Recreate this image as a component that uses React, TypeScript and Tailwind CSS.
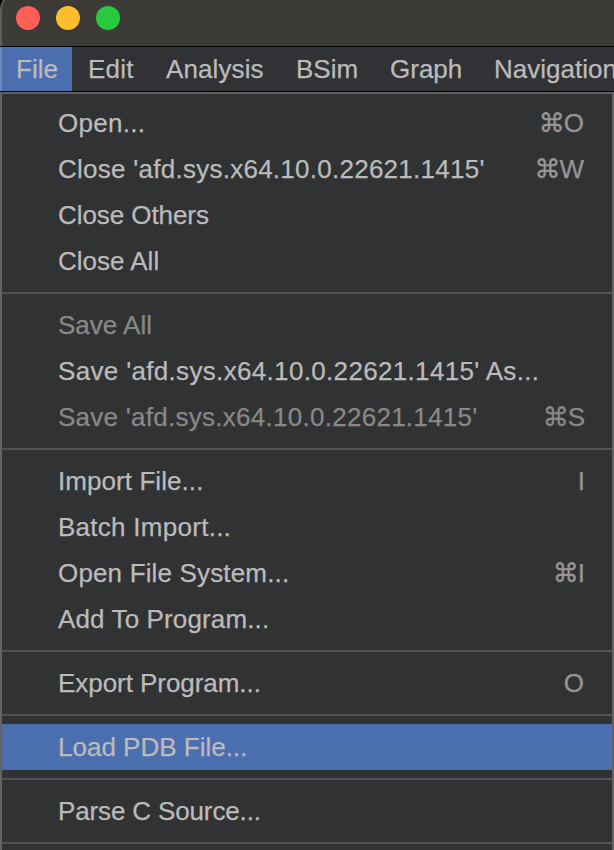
type Entry = { label: string; spacing: string; keys?: string; cmd?: boolean; disabled?: boolean; active?: boolean };

const bar = [
  { label: 'File', box: 'w-[72px]', active: true },
  { label: 'Edit', box: 'w-[78px] tracking-[0.2px]' },
  { label: 'Analysis', box: 'w-[130px] tracking-[0.1px]' },
  { label: 'BSim', box: 'w-[94px]' },
  { label: 'Graph', box: 'w-[104px]' },
  { label: 'Navigation', box: 'w-[136px]' },
];

const groups: Entry[][] = [
  [
    { label: 'Open...', spacing: 'tracking-[0.3px]', keys: 'O', cmd: true },
    { label: "Close 'afd.sys.x64.10.0.22621.1415'", spacing: 'tracking-[0.26px]', keys: 'W', cmd: true },
    { label: 'Close Others', spacing: 'tracking-[-0.07px]' },
    { label: 'Close All', spacing: 'tracking-normal' },
  ],
  [
    { label: 'Save All', spacing: 'tracking-normal', disabled: true },
    { label: "Save 'afd.sys.x64.10.0.22621.1415' As...", spacing: 'tracking-[0.33px]' },
    { label: "Save 'afd.sys.x64.10.0.22621.1415'", spacing: 'tracking-[0.27px]', keys: 'S', cmd: true, disabled: true },
  ],
  [
    { label: 'Import File...', spacing: 'tracking-[0.07px]', keys: 'I' },
    { label: 'Batch Import...', spacing: 'tracking-[0.27px]' },
    { label: 'Open File System...', spacing: 'tracking-[0.16px]', keys: 'I', cmd: true },
    { label: 'Add To Program...', spacing: 'tracking-[0.13px]' },
  ],
  [{ label: 'Export Program...', spacing: 'tracking-[-0.05px]', keys: 'O' }],
  [{ label: 'Load PDB File...', spacing: 'tracking-normal', active: true }],
  [{ label: 'Parse C Source...', spacing: 'tracking-[-0.14px]' }],
];

function MenuRow({ item }: { item: Entry }) {
  return (
    <div
      className={`flex h-[46px] shrink-0 items-center justify-between pl-14 ${
        item.keys === 'I' || item.keys === 'S' ? 'pr-[27px]' : 'pr-7'
      } ${item.active ? 'bg-[#4b6eaf]' : ''} ${item.disabled ? 'text-[#888888]' : 'text-[#bbbbbb]'}`}
    >
      <span className={`whitespace-pre ${item.spacing}`}>{item.label}</span>
      {item.keys && (
        <span className={`flex items-center ${item.disabled ? 'text-[#888888]' : 'text-[#969696]'}`}>
          {item.cmd && (
            <span className="mr-[-1px] font-['DejaVu_Sans',sans-serif] text-[26px] [-webkit-text-stroke:0.4px]">⌘</span>
          )}
          <span>{item.keys}</span>
        </span>
      )}
    </div>
  );
}

export default function App() {
  return (
    <div className="h-[850px] w-[614px] overflow-hidden bg-black font-['Liberation_Sans',Arial,sans-serif] text-[26px] leading-[46px] [-webkit-text-stroke:0.25px]">
      <div className="-mt-2 flex h-[858px] flex-col">
        <header className="flex h-[54px] shrink-0 gap-4 rounded-tl-[18px] border-t-2 border-l-2 border-[#5e5e5c] bg-[#3b3a37] pt-3 pl-[14px]">
          <span className="size-6 rounded-full bg-[#ff5f57]" />
          <span className="size-6 rounded-full bg-[#febc2e]" />
          <span className="size-6 rounded-full bg-[#28c840]" />
        </header>
        <nav className="flex h-[46px] shrink-0 border-y border-black bg-[#313235] leading-[45px] text-[#bbbbbb]">
          {bar.map((b) => (
            <div
              key={b.label}
              className={`shrink-0 ${b.box} ${b.active ? 'border-l-2 border-[#7089b8] bg-[#4b6eaf] pl-[14px]' : 'pl-4'}`}
            >
              {b.label}
            </div>
          ))}
        </nav>
        <main className="flex h-[758px] flex-col overflow-hidden border-x-2 border-t-2 border-[#616263] bg-[#313234] pt-[6px]">
          {groups.map((g, i) => (
            <section key={i} className="shrink-0">
              {g.map((item) => (
                <MenuRow key={item.label} item={item} />
              ))}
              <hr className="my-2 h-[2px] border-0 bg-[#515254]" />
            </section>
          ))}
        </main>
      </div>
    </div>
  );
}
